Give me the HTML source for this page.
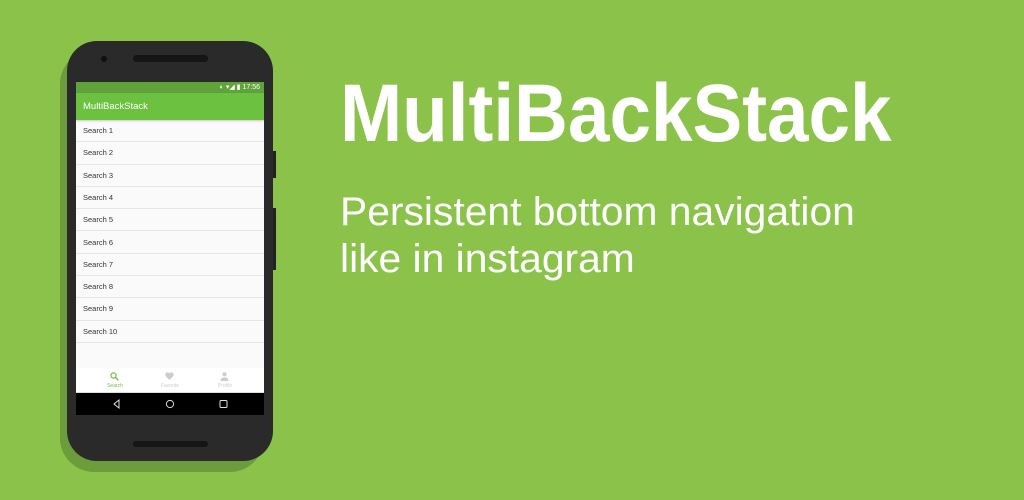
<!DOCTYPE html>
<html><head><style>
*{margin:0;padding:0;box-sizing:border-box}
body{width:1024px;height:500px;background:#8bc34a;position:relative;overflow:hidden;font-family:"Liberation Sans",sans-serif}
.abs{position:absolute}
.row{position:absolute;left:0;width:188px;height:22.3px;border-bottom:1px solid #e6e6e6;font-size:7.5px;color:#333;padding-left:7px;line-height:21px}
</style></head><body>
<div class="abs" style="left:60px;top:50px;width:204px;height:422px;background:#6d9c3c;border-radius:34px"></div>
<div class="abs" style="left:273px;top:151px;width:3px;height:27px;background:#222"></div>
<div class="abs" style="left:273px;top:208px;width:3px;height:62px;background:#222"></div>
<div class="abs" style="left:67px;top:41px;width:206px;height:420px;background:#2a2a2a;border-radius:30px"></div>
<div class="abs" style="left:101px;top:56px;width:6px;height:6px;background:#111;border-radius:50%"></div>
<div class="abs" style="left:133px;top:55px;width:75px;height:7px;background:#151515;border-radius:4px"></div>
<div class="abs" style="left:133px;top:441px;width:75px;height:6px;background:#151515;border-radius:3px"></div>
<div class="abs" style="left:76px;top:82px;width:188px;height:333px;background:#fafafa;overflow:hidden">
 <div class="abs" style="left:0;top:0;width:188px;height:11px;background:#5ea43a;color:#fff;font-size:7px;text-align:right;padding-right:4px;line-height:11px">◐ ▾◢ ▮ 17:56</div>
 <div class="abs" style="left:0;top:11px;width:188px;height:27px;background:#6cc141;color:#fff;font-size:9.5px;padding-left:7px;line-height:27px;box-shadow:0 1px 2px rgba(0,0,0,.2)">MultiBackStack</div>
 <div class="row" style="top:38px">Search 1</div>
 <div class="row" style="top:60.3px">Search 2</div>
 <div class="row" style="top:82.6px">Search 3</div>
 <div class="row" style="top:104.9px">Search 4</div>
 <div class="row" style="top:127.2px">Search 5</div>
 <div class="row" style="top:149.5px">Search 6</div>
 <div class="row" style="top:171.8px">Search 7</div>
 <div class="row" style="top:194.1px">Search 8</div>
 <div class="row" style="top:216.4px">Search 9</div>
 <div class="row" style="top:238.7px">Search 10</div>
 <div class="abs" style="left:0;top:286px;width:188px;height:25px;background:#fff;border-bottom:1px solid #ddd">
  <svg class="abs" style="left:34px;top:4px" width="9" height="9" viewBox="0 0 9 9"><circle cx="3.5" cy="3.5" r="2.6" fill="none" stroke="#6cc141" stroke-width="1.2"/><path d="M5.4 5.4L8.3 8.3" stroke="#6cc141" stroke-width="1.4"/></svg>
  <div class="abs" style="left:24px;top:15px;width:30px;text-align:center;font-size:5px;color:#6cc141">Search</div>
  <svg class="abs" style="left:89px;top:4px" width="9" height="8" viewBox="0 0 9 8"><path d="M4.5 8L0.8 4.2A2.2 2.2 0 0 1 4.5 1.3A2.2 2.2 0 0 1 8.2 4.2Z" fill="#ccc"/></svg>
  <div class="abs" style="left:79px;top:15px;width:30px;text-align:center;font-size:5px;color:#ccc">Favorite</div>
  <svg class="abs" style="left:144px;top:4px" width="9" height="9" viewBox="0 0 9 9"><circle cx="4.5" cy="2.3" r="2" fill="#ccc"/><path d="M0.5 9Q0.5 5.3 4.5 5.3Q8.5 5.3 8.5 9Z" fill="#ccc"/></svg>
  <div class="abs" style="left:134px;top:15px;width:30px;text-align:center;font-size:5px;color:#ccc">Profile</div>
 </div>
 <div class="abs" style="left:0;top:311px;width:188px;height:22px;background:#000">
  <svg class="abs" style="left:37px;top:6px" width="120" height="10" viewBox="0 0 120 10"><path d="M6 1L1 5L6 9Z" fill="none" stroke="#ddd" stroke-width="1"/><circle cx="57" cy="5" r="3.6" fill="none" stroke="#ddd" stroke-width="1"/><rect x="107" y="1.5" width="7" height="7" rx="1" fill="none" stroke="#ddd" stroke-width="1"/></svg>
 </div>
</div>
<div class="abs" style="left:340px;top:64px;font-size:82px;font-weight:bold;color:#fff;transform:scaleX(0.91);transform-origin:left top;white-space:nowrap;line-height:100px">MultiBackStack</div>
<div class="abs" style="left:340px;top:189px;font-size:40px;color:#fff;white-space:nowrap;line-height:47px;transform:scaleX(1.02);transform-origin:left top">Persistent bottom navigation<br>like in instagram</div>
</body></html>
